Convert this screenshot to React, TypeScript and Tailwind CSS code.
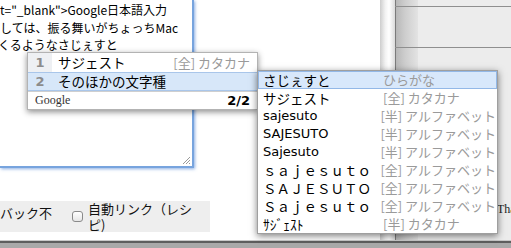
import React from "react";

const jp = "font-['Noto_Sans_CJK_JP',sans-serif]";
const latin = "font-['DejaVu_Sans','Noto_Sans_CJK_JP',sans-serif]";

type Row = { t: string; d: string; sel?: boolean; lat?: boolean };

const rows: Row[] = [
  { t: "さじぇすと", d: "ひらがな", sel: true },
  { t: "サジェスト", d: "[全] カタカナ" },
  { t: "sajesuto", d: "[半] アルファベット", lat: true },
  { t: "SAJESUTO", d: "[半] アルファベット", lat: true },
  { t: "Sajesuto", d: "[半] アルファベット", lat: true },
  { t: "ｓａｊｅｓｕｔｏ", d: "[全] アルファベット" },
  { t: "ＳＡＪＥＳＵＴＯ", d: "[全] アルファベット" },
  { t: "Ｓａｊｅｓｕｔｏ", d: "[全] アルファベット" },
  { t: "ｻｼﾞｪｽﾄ", d: "[半] カタカナ" },
];

export default function App() {
  return (
    <div className={`relative w-[511px] h-[248px] overflow-hidden bg-white ${jp}`}>
      <div className="flex flex-col h-full">
        <div className="flex h-[240px]">
          {/* page area */}
          <div className="w-[380px] bg-white flex flex-col">
            <div className="relative w-[194px] h-[168px] border-r-2 border-b-2 border-[#77a4de] shadow-[1px_1px_3px_rgba(90,140,215,0.7)] pt-[1px] text-[12px] leading-[17.5px] text-black whitespace-nowrap overflow-hidden">
              <div>t="_blank"&gt;Google日本語入力</div>
              <div>しては、振る舞いがちょっちMac</div>
              <div className="-ml-[2px]">
                くるような
                <span className="underline decoration-2 underline-offset-[2px]">さじぇすと</span>
              </div>
              <svg className="absolute right-[1px] bottom-[1px]" width="9" height="9" viewBox="0 0 9 9">
                <line x1="8" y1="1" x2="1" y2="8" stroke="#9a9a9a" strokeWidth="1" />
                <line x1="8" y1="4" x2="4" y2="8" stroke="#9a9a9a" strokeWidth="1" />
                <line x1="8" y1="7" x2="7" y2="8" stroke="#9a9a9a" strokeWidth="1" />
              </svg>
            </div>
            <div className="mt-[33px] w-[210px] h-[31px] bg-[#eeeeee] flex items-center text-[13px] leading-[15px] text-[#111]">
              <span className="self-start mt-[4px]">バック不</span>
              <span className="ml-[20px] w-[11px] h-[11px] rounded-[3px] border border-[#8a8a8a] bg-[linear-gradient(#ffffff,#e6e6e6)]" />
              <span className="ml-[5px] flex flex-col">
                <span className="h-[16px]">自動リンク（レシ</span>
                <span className="h-[15px]">ピ)</span>
              </span>
            </div>
          </div>
          {/* scroll-like bar */}
          <div className="w-[15px] bg-[linear-gradient(to_right,#cdcdcd,#f2f2f2_35%,#ffffff_60%,#dadada)]" />
          {/* right panel */}
          <div className="flex-1 border-l border-[#7a7a7a] bg-[#ececec] relative flex">
            <div className="w-[22px] bg-[linear-gradient(to_right,#b8b8b8,#cdcdcd_40%,#e3e3e3)]" />
            <div className="flex-1" />
          </div>
        </div>
        <div className="h-[8px] border-t border-[#c9c9c9] bg-[#a9a9a9] flex flex-col">
          <div className="h-[2px] bg-[#5e5e5e]" />
        </div>
      </div>

      {/* horizontal lines on right panel */}
      <div className="absolute left-[395px] right-0 top-[6px] h-px bg-[#8f8f8f]" />
      <div className="absolute left-[395px] right-0 top-[47px] h-px bg-[#8f8f8f]" />
      <div className="absolute left-[497px] top-[202px] text-[12px] leading-[14px] text-[#222] font-['Liberation_Serif',serif]">
        That
      </div>

      {/* Candidate window 1 */}
      <div className="absolute left-[27px] top-[52px] w-[231px] bg-white border border-[#b3b3b3] shadow-[0_2px_6px_rgba(0,0,0,0.45)] leading-[17px]">
        <div className="flex items-center h-[19px]">
          <div className={`w-[24px] h-full bg-[#eef0f3] flex items-center justify-center text-[13px] font-bold text-[#8c8c8c] ${latin}`}>1</div>
          <div className="pl-[6px] text-[13.5px] text-black">サジェスト</div>
          <div className="ml-auto pr-[7px] text-[13px] text-[#9a9a9a]">[全] カタカナ</div>
        </div>
        <div className="flex items-center h-[19px] bg-[#d7e7f9] border-y border-[#a9c6ea]">
          <div className={`w-[24px] h-full flex items-center justify-center text-[13px] font-bold text-[#8c8c8c] ${latin}`}>2</div>
          <div className="pl-[6px] text-[13.5px] text-black">そのほかの文字種</div>
        </div>
        <div className="flex items-center justify-between h-[18px] border-t border-[#cfcfcf] pl-[7px] pr-[7px]">
          <span className="font-['Liberation_Serif',serif] text-[12px] text-[#333]">Google</span>
          <span className={`${latin} font-bold text-[13px] text-black`}>2/2</span>
        </div>
      </div>

      {/* Candidate window 2 */}
      <div className="absolute left-[257px] top-[70px] w-[241px] bg-white border border-[#9f9f9f] shadow-[0_2px_7px_rgba(0,0,0,0.5)] leading-[16px]">
        {rows.map((r, i) => (
          <div
            key={i}
            className={
              r.sel
                ? "flex items-center h-[18px] bg-[#d8e8fb] border border-[#93b8e7]"
                : "flex items-center h-[18px] border border-transparent"
            }
          >
            <div
              className={
                r.lat
                  ? `w-[124px] pl-[4px] text-[13px] text-black whitespace-nowrap ${latin}`
                  : `w-[124px] pl-[4px] text-[13.5px] text-black whitespace-nowrap ${jp}`
              }
            >
              {r.t}
            </div>
            <div className="text-[13px] text-[#9a9a9a] whitespace-nowrap">{r.d}</div>
          </div>
        ))}
      </div>
    </div>
  );
}
